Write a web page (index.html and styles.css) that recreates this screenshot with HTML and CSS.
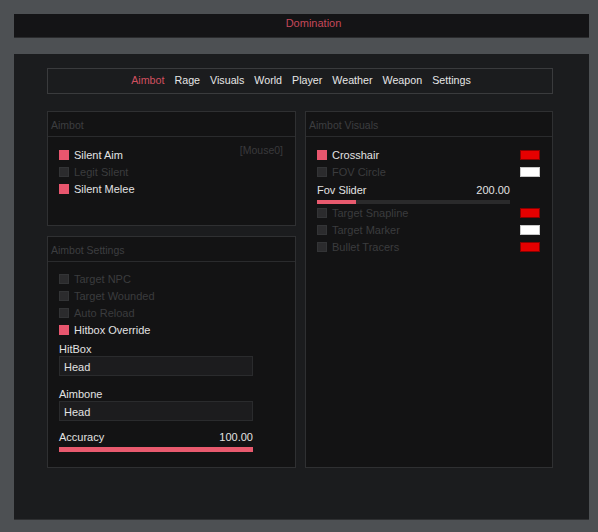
FILE: index.html
```html
<!DOCTYPE html>
<html lang="en">
<head>
  <meta charset="UTF-8">
  <title>Domination</title>
  <link rel="stylesheet" href="styles.css">
</head>
<body>

  <div class="title-bar">Domination</div>

  <div class="main">
    <div class="nav">
      <span class="nav-item active">Aimbot</span>
      <span class="nav-item">Rage</span>
      <span class="nav-item">Visuals</span>
      <span class="nav-item">World</span>
      <span class="nav-item">Player</span>
      <span class="nav-item">Weather</span>
      <span class="nav-item">Weapon</span>
      <span class="nav-item">Settings</span>
    </div>

    <div class="columns">
      <div class="column">
        <div class="box box-aimbot">
          <div class="box-header">Aimbot</div>
          <div class="box-body">
            <span class="keybind">[Mouse0]</span>
            <div class="check-row"><span class="check on"></span><span class="check-label">Silent Aim</span></div>
            <div class="check-row off"><span class="check"></span><span class="check-label">Legit Silent</span></div>
            <div class="check-row"><span class="check on"></span><span class="check-label">Silent Melee</span></div>
          </div>
        </div>

        <div class="box box-settings">
          <div class="box-header">Aimbot Settings</div>
          <div class="box-body">
            <div class="check-row off"><span class="check"></span><span class="check-label">Target NPC</span></div>
            <div class="check-row off"><span class="check"></span><span class="check-label">Target Wounded</span></div>
            <div class="check-row off"><span class="check"></span><span class="check-label">Auto Reload</span></div>
            <div class="check-row"><span class="check on"></span><span class="check-label">Hitbox Override</span></div>

            <div class="field">
              <div class="field-label">HitBox</div>
              <div class="select">Head</div>
            </div>
            <div class="field">
              <div class="field-label">Aimbone</div>
              <div class="select">Head</div>
            </div>

            <div class="slider slider-wide">
              <div class="slider-top"><span>Accuracy</span><span>100.00</span></div>
              <div class="track"><div class="fill" style="width: 100%"></div></div>
            </div>
          </div>
        </div>
      </div>

      <div class="column">
        <div class="box box-visuals">
          <div class="box-header">Aimbot Visuals</div>
          <div class="box-body">
            <div class="check-row"><span class="check on"></span><span class="check-label">Crosshair</span><span class="swatch red"></span></div>
            <div class="check-row off"><span class="check"></span><span class="check-label">FOV Circle</span><span class="swatch white"></span></div>
            <div class="slider">
              <div class="slider-top"><span>Fov Slider</span><span>200.00</span></div>
              <div class="track"><div class="fill" style="width: 20%"></div></div>
            </div>
            <div class="check-row off"><span class="check"></span><span class="check-label">Target Snapline</span><span class="swatch red"></span></div>
            <div class="check-row off"><span class="check"></span><span class="check-label">Target Marker</span><span class="swatch white"></span></div>
            <div class="check-row off"><span class="check"></span><span class="check-label">Bullet Tracers</span><span class="swatch red"></span></div>
          </div>
        </div>
      </div>
    </div>
  </div>

</body>
</html>
```

FILE: styles.css
```css
body {
  margin: 0;
  padding: 14px 9px 12px 14px;
  background-color: #4d5053;
  font-family: "Liberation Sans", Arial, sans-serif;
  font-size: 11px;
  color: #e2e2e2;
}

.title-bar {
  height: 24px;
  line-height: 18px;
  padding-left: 24px;
  text-align: center;
  background-color: #141416;
  color: #c4485a;
  box-sizing: border-box;
  border-bottom: 1px solid #2a2b2d;
}

.main {
  margin-top: 16px;
  height: 466px;
  box-sizing: border-box;
  padding: 14px 36px 0 33px;
  background-color: #1b1c1e;
  border-bottom: 1px solid #2e2f31;
}

.nav {
  height: 26px;
  box-sizing: border-box;
  border: 1px solid #3a3b3d;
  display: flex;
  justify-content: center;
  align-items: center;
  gap: 10px;
  padding-bottom: 2px;
  padding-left: 2px;
  font-size: 10.7px;
}

.nav-item {
  color: #e6e6e6;
}

.nav-item.active {
  color: #d0505f;
}

.columns {
  display: grid;
  grid-template-columns: 249px 248px;
  gap: 9px;
  margin-top: 17px;
}

.column {
  display: flex;
  flex-direction: column;
  gap: 10px;
}

.box {
  border: 1px solid #2f3032;
  background-color: #131314;
  box-sizing: border-box;
}

.box-aimbot { height: 115px; }
.box-settings { height: 232px; }
.box-visuals { height: 357px; }

.box-header {
  height: 24px;
  line-height: 27px;
  padding-left: 3px;
  font-size: 10.5px;
  color: #3d3e40;
  border-bottom: 1px solid #2a2b2d;
}

.box-body {
  position: relative;
  padding: 9px 12px 0 11px;
}

.box-settings .box-body {
  padding-top: 8px;
}

.keybind {
  position: absolute;
  top: 7px;
  right: 12px;
  color: #3a3a3c;
  font-size: 10.5px;
}

.check-row {
  display: flex;
  align-items: center;
  height: 17px;
}

.check {
  width: 10px;
  height: 10px;
  margin-right: 5px;
  box-sizing: border-box;
  background-color: #2b2b2d;
  border: 1px solid #333436;
}

.check.on {
  background-color: #e8566e;
  border-color: #e8566e;
}

.check-label {
  flex: 1;
}

.check-row.off .check-label {
  color: #3b3c3e;
}

.swatch {
  width: 20px;
  height: 10px;
  box-sizing: border-box;
  border: 1px solid #8a0000;
}

.swatch.red {
  background-color: #e60000;
}

.swatch.white {
  background-color: #ffffff;
  border-color: #c8c8c8;
}

.field {
  margin-top: 4px;
  width: 194px;
}

.field + .field {
  margin-top: 11px;
}

.field-label {
  height: 14px;
  line-height: 14px;
  color: #e2e2e2;
}

.select {
  height: 20px;
  line-height: 20px;
  box-sizing: border-box;
  padding-left: 4px;
  background-color: #1c1c1e;
  border: 1px solid #2a2b2d;
  color: #e2e2e2;
}

.slider {
  width: 193px;
}

.slider-wide {
  width: 194px;
  margin-top: 9px;
}

.slider-top {
  display: flex;
  justify-content: space-between;
  height: 14px;
  line-height: 14px;
  margin-top: 3px;
}

.track {
  height: 4px;
  margin-top: 3px;
  background-color: #2a2a2b;
}

.slider-wide .track {
  height: 5px;
  margin-top: 3px;
}

.fill {
  height: 100%;
  background-color: #e85a6e;
}
```
